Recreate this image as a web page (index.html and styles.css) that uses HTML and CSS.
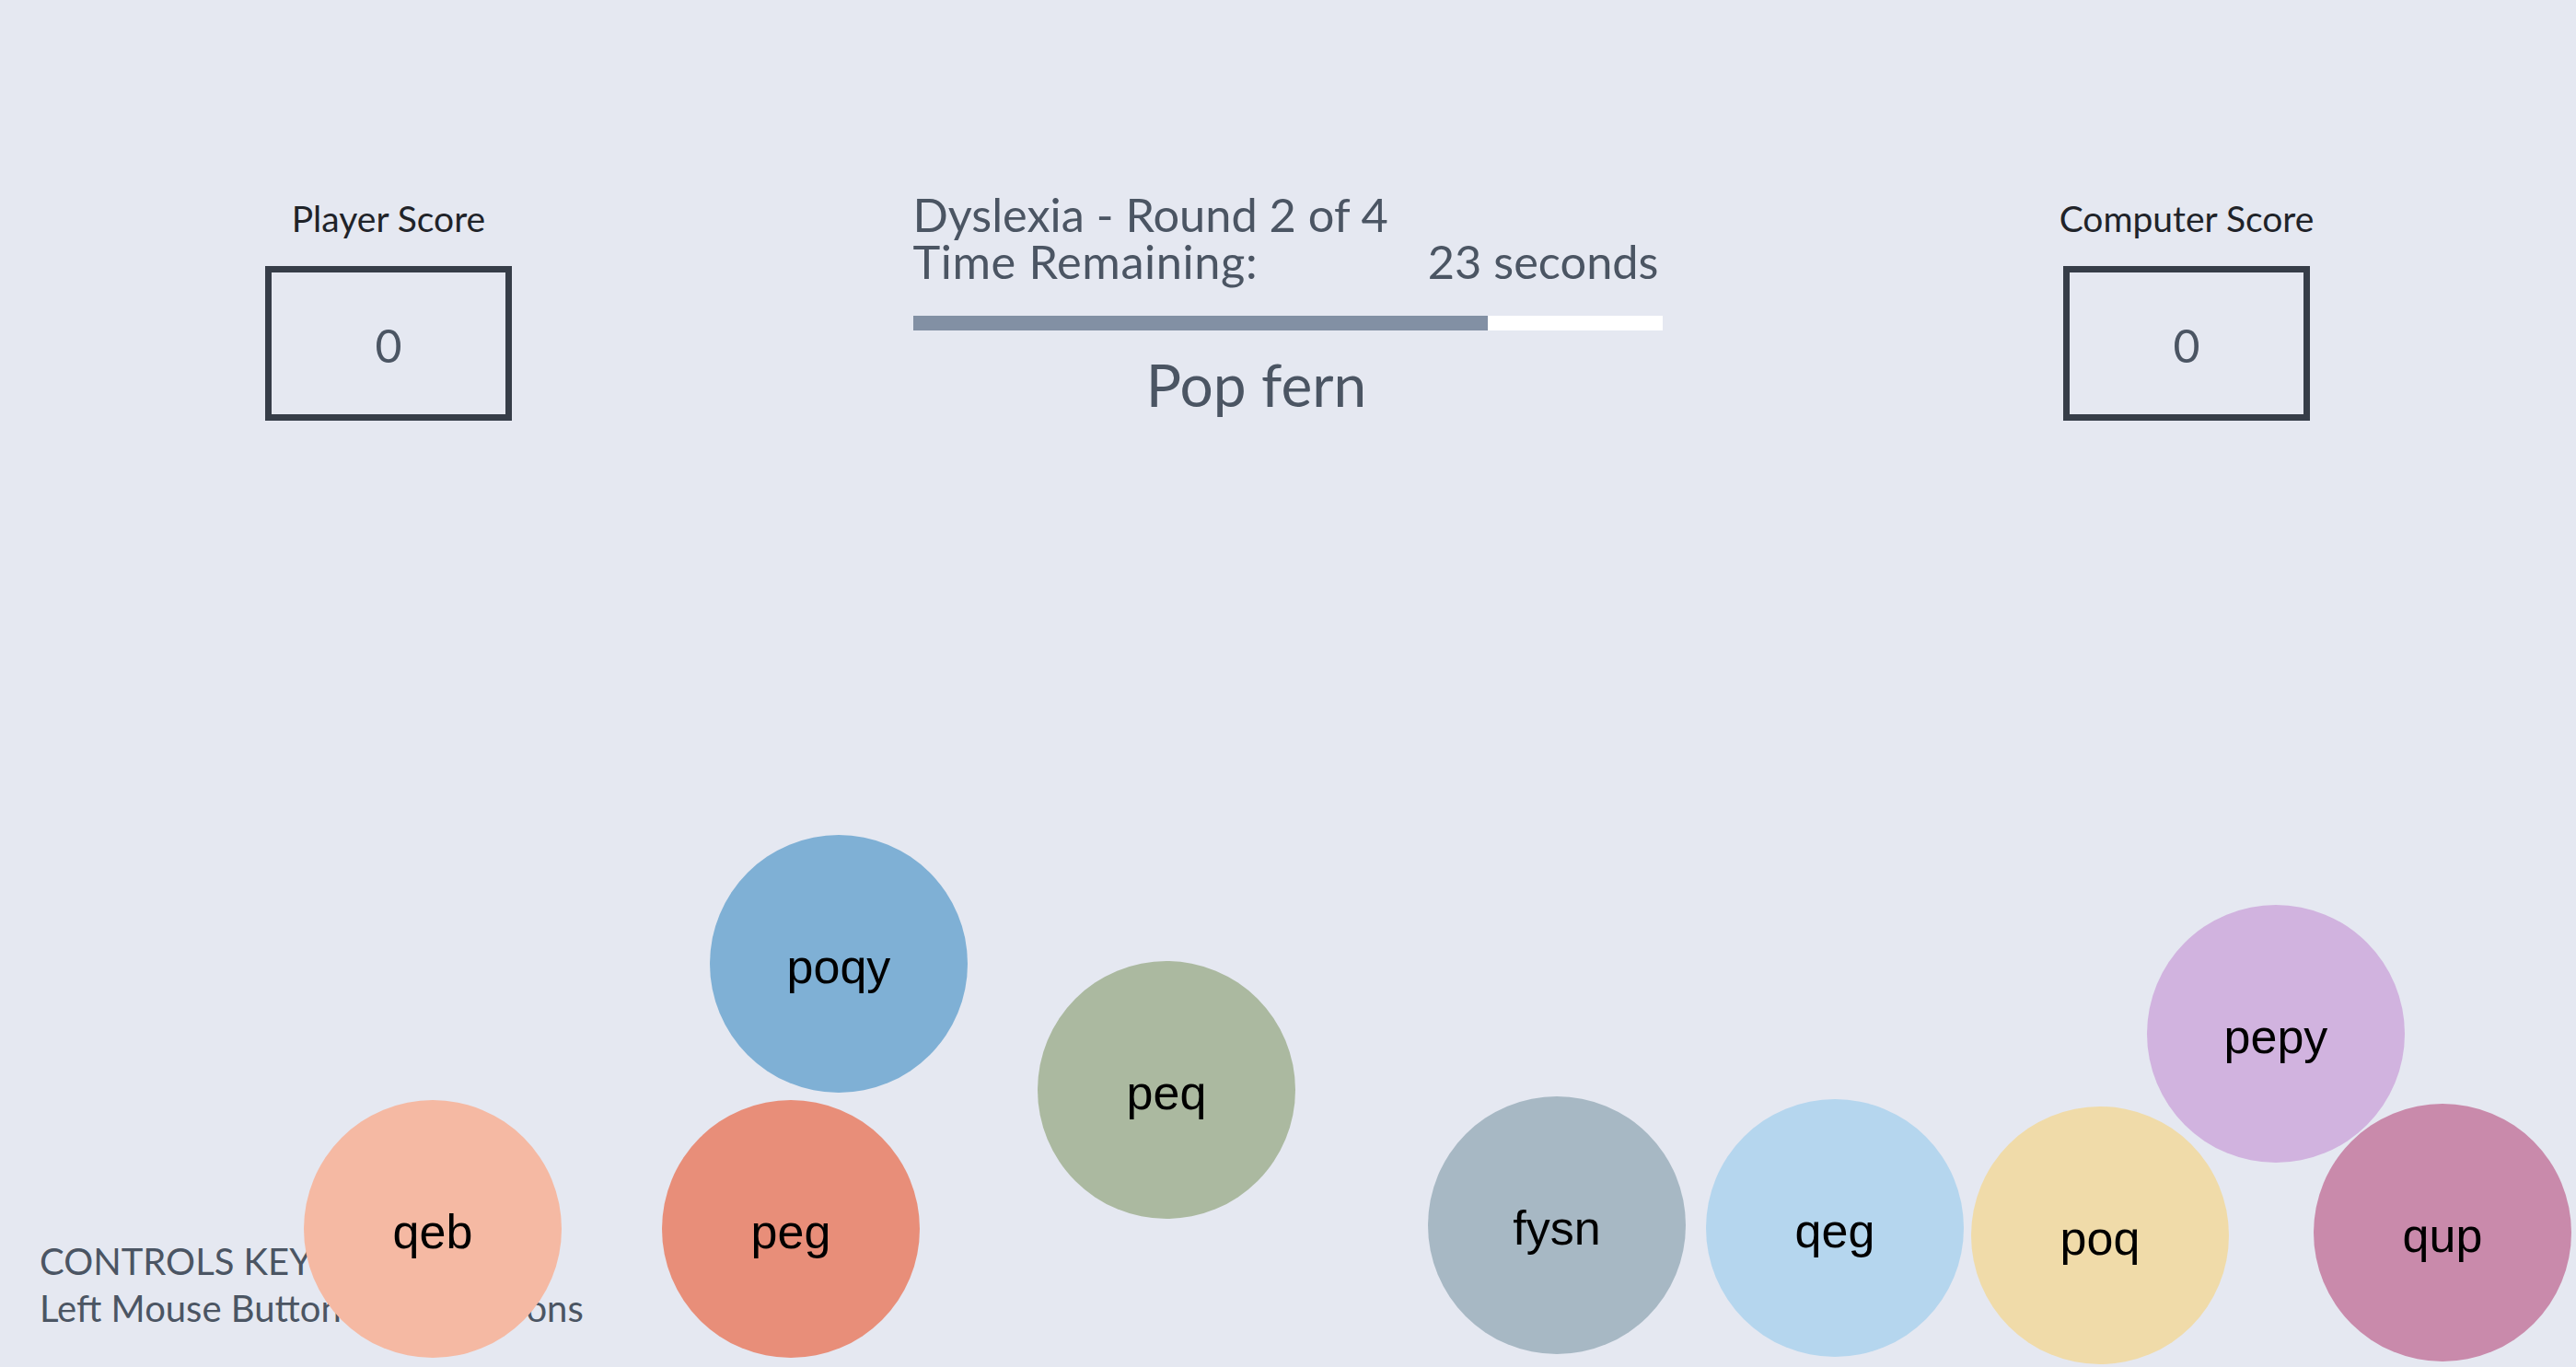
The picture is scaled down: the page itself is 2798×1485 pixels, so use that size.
FILE: index.html
```html
<!DOCTYPE html>
<html lang="en">
<head>
<meta charset="utf-8">
<title>Balloon Pop - Dyslexia</title>
<link rel="stylesheet" href="styles.css">
</head>
<body>
<div class="game">
  <header class="hud">
    <section class="score">
      <h2 class="score-label">Player Score</h2>
      <div class="score-box">0</div>
    </section>
    <section class="status">
      <div class="round">Dyslexia - Round 2 of 4</div>
      <div class="time-row"><span class="time-label">Time Remaining:</span><span>23 seconds</span></div>
      <div class="timer-bar"><div class="timer-fill" style="width: 76.7%"></div></div>
      <div class="target">Pop fern</div>
    </section>
    <section class="score">
      <h2 class="score-label">Computer Score</h2>
      <div class="score-box">0</div>
    </section>
  </header>
  <main class="field"></main>
  <footer class="controls">
    <div>CONTROLS KEY:</div>
    <div>Left Mouse Button - Pop Balloons</div>
  </footer>
  <div class="balloon c-salmon" style="left: 330px; top: 1195px">qeb</div>
  <div class="balloon c-coral" style="left: 719px; top: 1195px">peg</div>
  <div class="balloon c-blue" style="left: 771px; top: 907px">poqy</div>
  <div class="balloon c-sage" style="left: 1127px; top: 1044px">peq</div>
  <div class="balloon c-slate" style="left: 1551px; top: 1191px">fysn</div>
  <div class="balloon c-sky" style="left: 1853px; top: 1194px">qeg</div>
  <div class="balloon c-sand" style="left: 2141px; top: 1202px">poq</div>
  <div class="balloon c-lilac" style="left: 2332px; top: 983px">pepy</div>
  <div class="balloon c-mauve" style="left: 2513px; top: 1199px">qup</div>
</div>
</body>
</html>
```

FILE: styles.css
```css
* { box-sizing: border-box; }
html, body {
  margin: 0;
  padding: 0;
  background: #e5e8f1;
  font-family: Lato, "Open Sans", sans-serif;
  color: #4b5563;
}
.game {
  position: relative;
  height: 100vh;
  display: flex;
  flex-direction: column;
  overflow: hidden;
}
.hud {
  display: flex;
  justify-content: space-between;
  align-items: flex-start;
  padding: 0 289px 0 288px;
}
.score {
  width: 268px;
  display: flex;
  flex-direction: column;
  align-items: center;
  padding-top: 214px;
}
.score-label {
  margin: 0;
  font-size: 39px;
  font-weight: 400;
  line-height: 1.2;
  color: #1f2329;
  white-space: nowrap;
}
.score-box {
  margin-top: 28px;
  width: 268px;
  height: 168px;
  border: 7px solid #363d48;
  display: flex;
  align-items: center;
  justify-content: center;
  font-size: 50px;
  color: #4b5563;
  padding-top: 4px;
}
.status {
  width: 814px;
  padding-top: 207px;
  font-size: 50.5px;
  line-height: 51px;
}
.time-row {
  display: flex;
  justify-content: space-between;
  padding-right: 4px;
}
.time-label { letter-spacing: 0.6px; }
.timer-bar {
  margin-top: 34px;
  height: 16px;
  background: #ffffff;
}
.timer-fill {
  height: 100%;
  background: #8290a4;
}
.target {
  margin-top: 21px;
  font-size: 64px;
  line-height: 1.2;
  text-align: center;
  padding-right: 68px;
}
.field { flex: 1; }
.controls {
  padding: 0 0 38px 43px;
  font-size: 40px;
  line-height: 51px;
  color: #4b5563;
}
.balloon {
  position: absolute;
  width: 280px;
  height: 280px;
  border-radius: 50%;
  display: flex;
  align-items: center;
  justify-content: center;
  font-family: "Liberation Sans", Arial, sans-serif;
  font-size: 52px;
  color: #000;
  padding-top: 6px;
}
.c-salmon { background: #f5b9a3; }
.c-coral { background: #e88e79; }
.c-blue { background: #7fb0d5; }
.c-sage { background: #abb9a0; }
.c-slate { background: #a7b8c4; }
.c-sky { background: #b5d6ee; }
.c-sand { background: #f0dba9; }
.c-lilac { background: #d1b3df; }
.c-mauve { background: #c98aab; }
```
